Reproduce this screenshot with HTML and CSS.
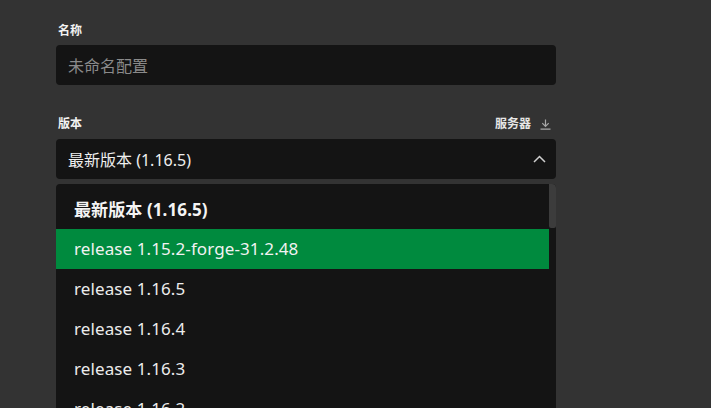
FILE: index.html
```html
<!DOCTYPE html>
<html lang="zh">
<head>
<meta charset="utf-8">
<link rel="stylesheet" href="styles.css">
</head>
<body>
<div class="form">
  <div class="field">
    <div class="label-row"><span class="label">名称</span></div>
    <div class="input placeholder">未命名配置</div>
  </div>
  <div class="field field-version">
    <div class="label-row">
      <span class="label">版本</span>
      <span class="label server">服务器
        <svg class="dl" width="11" height="11" viewBox="0 0 11 11"><path d="M5.5 0.5V7M2.3 4.2L5.5 7.4L8.7 4.2M0.5 10.2H10.5" fill="none" stroke="#a8a8a8" stroke-width="1.2"/></svg>
      </span>
    </div>
    <div class="input select">
      <span>最新版本 (1.16.5)</span>
      <svg class="chev" width="13" height="8" viewBox="0 0 13 8"><path d="M1 7L6.5 1.5L12 7" fill="none" stroke="#cfcfcf" stroke-width="1.5"/></svg>
    </div>
    <div class="dropdown">
      <div class="list">
        <div class="item header">最新版本 (1.16.5)</div>
        <div class="item active">release 1.15.2-forge-31.2.48</div>
        <div class="item">release 1.16.5</div>
        <div class="item">release 1.16.4</div>
        <div class="item">release 1.16.3</div>
        <div class="item">release 1.16.2</div>
      </div>
      <div class="track"><div class="thumb"></div></div>
    </div>
  </div>
</div>
</body>
</html>
```

FILE: styles.css
```css
html, body {
  margin: 0;
  height: 100%;
  overflow: hidden;
}
body {
  background: #333333;
  font-family: "Noto Sans", "Noto Sans CJK SC", sans-serif;
  color: #ececec;
}
.form {
  width: 500px;
  padding: 23px 0 0 56px;
  display: flex;
  flex-direction: column;
  gap: 31px;
}
.field {
  display: flex;
  flex-direction: column;
}
.label-row {
  display: flex;
  justify-content: space-between;
  align-items: center;
  height: 16px;
  margin-bottom: 6px;
  padding: 0 5px 0 2px;
}
.field-version .label-row {
  margin-bottom: 7px;
}
.label {
  font-size: 12px;
  font-weight: 700;
  line-height: 16px;
  color: #f2f2f2;
}
.server {
  display: flex;
  align-items: center;
  gap: 9px;
  color: #e6e6e6;
}
.dl {
  display: block;
}
.input {
  height: 40px;
  box-sizing: border-box;
  background: #141414;
  border-radius: 4px;
  padding: 0 12px;
  display: flex;
  align-items: center;
  font-size: 16px;
}
.placeholder {
  color: #8a8a8a;
}
.select {
  justify-content: space-between;
  color: #efefef;
  padding-right: 10px;
}
.chev {
  display: block;
}
.dropdown {
  margin-top: 5px;
  height: 240px;
  background: #141414;
  border-radius: 4px 4px 0 0;
  display: flex;
  overflow: hidden;
}
.list {
  flex: 1;
  padding-top: 5px;
}
.item {
  height: 40px;
  box-sizing: border-box;
  display: flex;
  align-items: center;
  padding: 0 18px 2px;
  font-size: 17px;
  letter-spacing: 0.1px;
  color: #ececec;
}
.item.header {
  font-weight: 700;
  color: #f4f4f4;
}
.item.active {
  background: #008a3e;
  color: #f2f2f2;
}
.track {
  width: 7px;
}
.thumb {
  height: 44px;
  background: #3c3c3c;
  border-radius: 0 2px 2px 2px;
}
```
